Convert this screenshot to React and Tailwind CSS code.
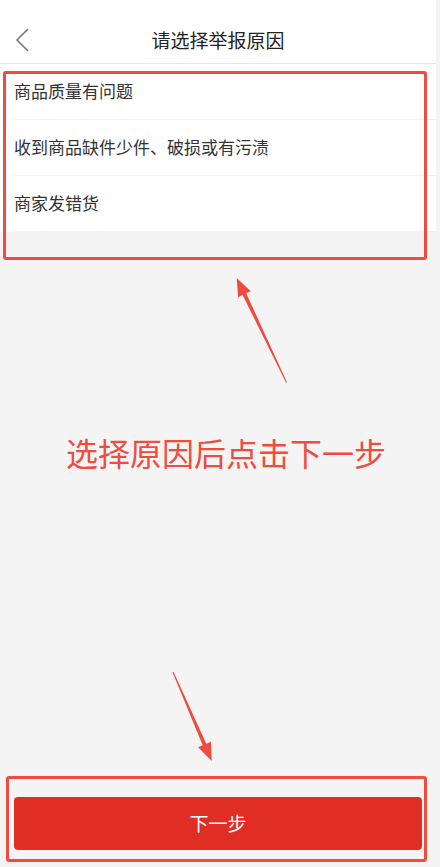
import React from "react";

const reasons = ["商品质量有问题", "收到商品缺件少件、破损或有污渍", "商家发错货"];

function Arrows() {
  return (
    <svg className="absolute inset-0 pointer-events-none" width="440" height="867" viewBox="0 0 440 867">
      <polygon
        fill="#f04b3f"
        points="286.95,382.3 246.2,293.3 250.7,291.2 236.7,278 238.1,297.2 242.6,295.1 286.05,382.7"
      />
      <polygon
        fill="#f04b3f"
        points="172.5,672.2 202.7,745.3 198.1,747.3 211.7,761 210.9,741.7 206.3,743.7 173.5,671.8"
      />
    </svg>
  );
}

export default function App() {
  return (
    <div
      className="relative w-[440px] h-[867px] bg-[#f4f4f4] overflow-hidden"
      style={{ fontFamily: '"Noto Sans CJK SC", "Noto Sans", sans-serif' }}
    >
      <div className="w-[436px] h-full flex flex-col">
        <header className="bg-white pt-[17px] border-b border-[#e6e6e6]">
          <div className="relative h-[46px] flex items-center justify-center">
            <svg className="absolute left-[14px] top-[11px]" width="16" height="24" viewBox="0 0 16 24">
              <path d="M14 1 L3 12 L14 23" fill="none" stroke="#777" strokeWidth="1.6" />
            </svg>
            <h1 className="text-[19px] text-[#222]">请选择举报原因</h1>
          </div>
        </header>

        <ul className="bg-white">
          {reasons.map((r, i) => (
            <li key={i} className="pl-[14px]">
              <div className="h-[56px] flex items-center border-b border-[#f0f0f0] text-[17px] text-[#333] pb-[1px]">
                {r}
              </div>
            </li>
          ))}
        </ul>

        <div className="flex-1 flex flex-col">
          <p className="mt-[200px] pl-[66px] text-[32px] leading-[40px] text-[#f04b3f]">选择原因后点击下一步</p>
        </div>

        <div className="px-[14px] pb-[17px]">
          <button className="w-[408px] h-[53px] rounded-[4px] bg-[#e02e24] text-white text-[19px]">下一步</button>
        </div>
      </div>

      <div className="absolute left-[3px] top-[71px] w-[424px] h-[189px] border-[3px] border-[#f04b3f] rounded-[3px]" />
      <div className="absolute left-[6px] top-[776px] w-[421px] h-[86px] border-[3px] border-[#f04b3f] rounded-[3px]" />
      <Arrows />
    </div>
  );
}
